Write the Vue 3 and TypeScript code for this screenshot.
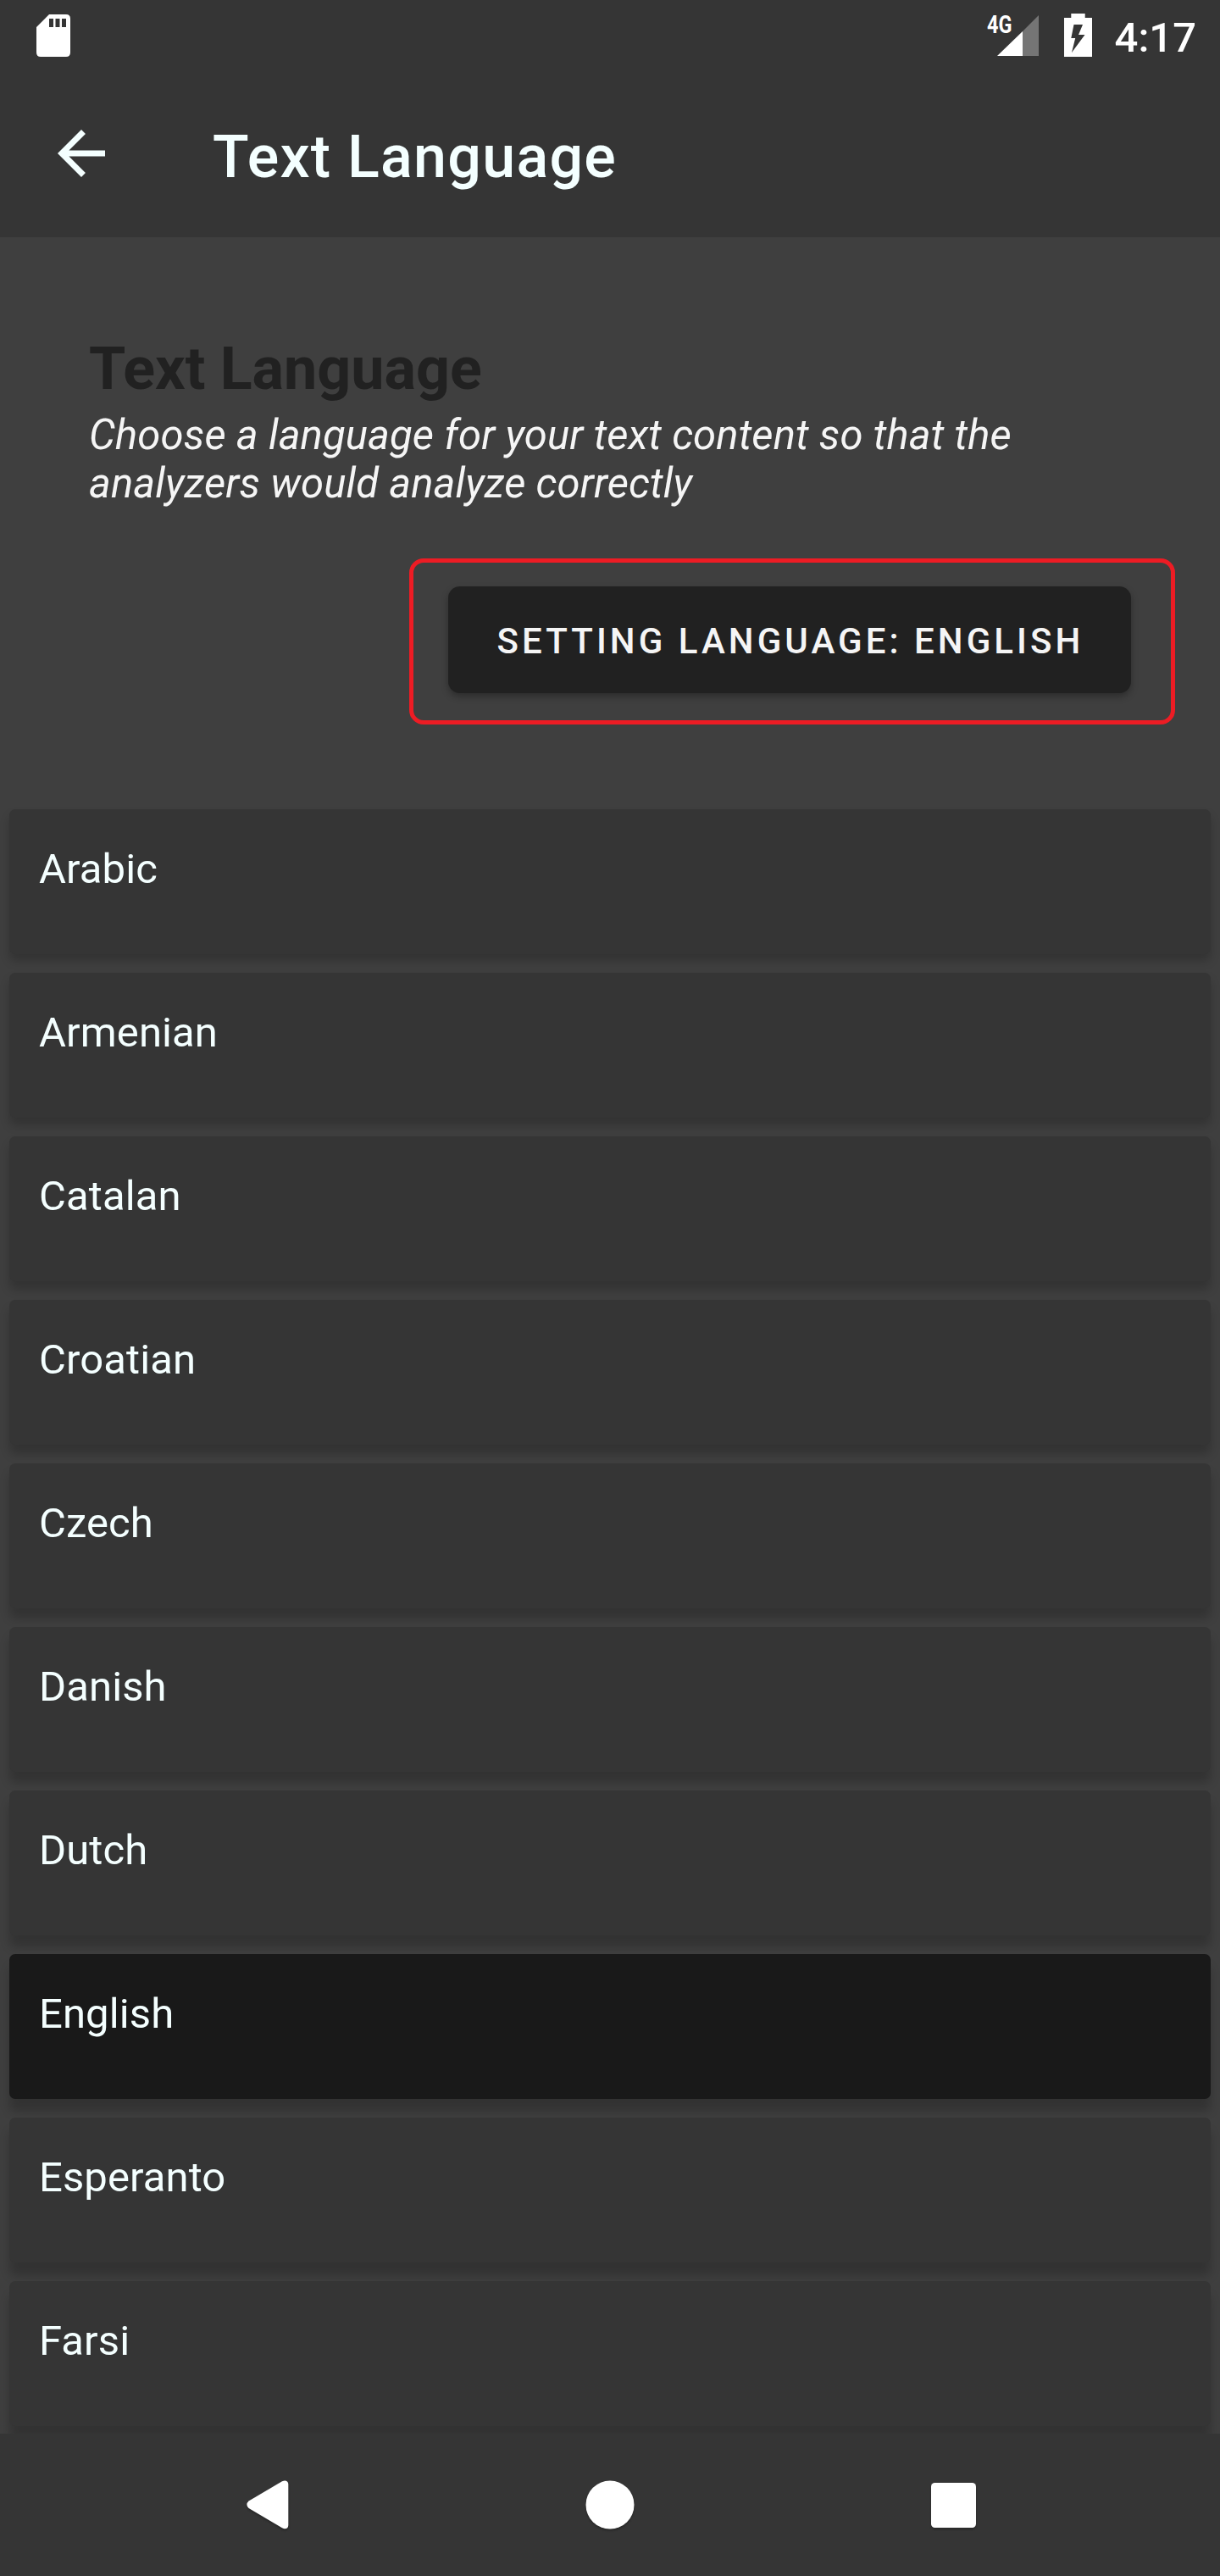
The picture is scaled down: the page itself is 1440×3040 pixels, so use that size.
<script setup lang="ts">
interface Language {
  name: string
  selected?: boolean
}

const languages: Language[] = [
  { name: 'Arabic' },
  { name: 'Armenian' },
  { name: 'Catalan' },
  { name: 'Croatian' },
  { name: 'Czech' },
  { name: 'Danish' },
  { name: 'Dutch' },
  { name: 'English', selected: true },
  { name: 'Esperanto' },
  { name: 'Farsi' },
]

const cardShadow = (index: number): string =>
  `0 ${(8 + index * 0.9).toFixed(1)}px 12px rgba(0, 0, 0, 0.2)`
</script>

<template>
  <div class="screen">
    <header class="top">
      <div class="status">
        <svg class="sd" width="40" height="50" viewBox="0 0 40 50">
          <path
            fill="#fff"
            fill-rule="evenodd"
            d="M15 0H35Q40 0 40 5V45Q40 50 35 50H5Q0 50 0 45V15ZM15 5V15H20V5ZM22.5 5V15H27.5V5ZM30 5V15H35V5Z"
          />
        </svg>
        <div class="status-right">
          <svg class="signal" width="66" height="62" viewBox="-4 -12 66 62">
            <path fill="#757575" d="M42 20L61 1V49H42Z" />
            <path fill="#fff" d="M12 49L42 20V49Z" />
            <text class="net" x="0" y="22" textLength="29.5" lengthAdjust="spacingAndGlyphs">4G</text>
          </svg>
          <svg class="battery" width="33" height="51" viewBox="0 0 33 51">
            <path
              fill="#fff"
              fill-rule="evenodd"
              d="M8.3 0H24.7V5H33V51H0V5H8.3ZM11.5 13L8.3 29H13.2L9 46L24.5 25H17L22 13Z"
            />
          </svg>
          <span class="time">4:17</span>
        </div>
      </div>
      <div class="bar">
        <svg class="back" width="84" height="84" viewBox="0 0 24 24">
          <path fill="#f4ffff" d="M20 11H7.83l5.59-5.59L12 4l-8 8 8 8 1.41-1.41L7.83 13H20v-2z" />
        </svg>
        <h1 class="title">Text Language</h1>
      </div>
    </header>

    <main class="body">
      <section class="intro">
        <h2 class="heading">Text Language</h2>
        <p class="desc">Choose a language for your text content so that the analyzers would analyze correctly</p>
      </section>
      <div class="action">
        <div class="highlight">
          <button class="setting" type="button">SETTING LANGUAGE: ENGLISH</button>
        </div>
      </div>
      <ul class="list">
        <li
          v-for="(lang, i) in languages"
          :key="lang.name"
          class="card"
          :class="{ selected: lang.selected }"
          :style="{ boxShadow: cardShadow(i) }"
        >
          {{ lang.name }}
        </li>
      </ul>
    </main>

    <nav class="nav">
      <svg width="50" height="58" viewBox="0 0 50 58">
        <path fill="#fff" d="M2.6 24.6L42 1.3Q44 .4 45 .4Q49.3 .4 49.3 5V53Q49.3 57.2 45 57.2Q44 57.2 42 56.2L2.6 33Q.4 31 .4 28.8Q.4 26.6 2.6 24.6Z" />
      </svg>
      <svg width="58" height="58" viewBox="0 0 58 58">
        <circle cx="29" cy="29" r="28.5" fill="#fff" />
      </svg>
      <svg width="53" height="53" viewBox="0 0 53 53">
        <rect width="53" height="53" rx="4.5" fill="#fff" />
      </svg>
    </nav>
  </div>
</template>

<style>
body {
  background: #3f3f3f;
}
</style>

<style scoped>
.screen {
  box-sizing: border-box;
  width: 1440px;
  height: 3040px;
  display: flex;
  flex-direction: column;
  overflow: hidden;
  background: #3f3f3f;
  font-family: Roboto, 'Liberation Sans', sans-serif;
}
.top {
  flex: none;
  height: 280px;
  background: #353535;
}
.status {
  display: flex;
  justify-content: space-between;
  height: 84px;
  padding: 0 28px 0 43px;
  box-sizing: border-box;
}
.sd {
  margin-top: 17px;
}
.status-right {
  display: flex;
  align-items: flex-start;
}
.signal {
  margin: 5px 29px 0 0;
}
.net {
  font-weight: 700;
  font-size: 29px;
  fill: #fff;
}
.battery {
  margin: 16px 27px 0 0;
}
.time {
  margin-top: 16px;
  font-size: 49px;
  font-weight: 500;
  line-height: 57px;
  color: #fff;
}
.bar {
  display: flex;
  align-items: center;
  height: 196px;
  padding-left: 54px;
}
.back {
  margin-right: 113px;
  margin-bottom: 3px;
}
.title {
  margin: 6px 0 0;
  font-size: 70px;
  font-weight: 500;
  line-height: 82px;
  letter-spacing: 1.25px;
  color: #f4ffff;
  white-space: nowrap;
}
.body {
  flex: 1;
  min-height: 0;
  overflow: hidden;
}
.intro {
  padding: 114px 105px 0;
}
.heading {
  margin: 0;
  font-size: 70px;
  font-weight: 700;
  line-height: 82px;
  color: #212121;
}
.desc {
  margin: 9px 0 0;
  width: 1130px;
  font-size: 49px;
  font-style: italic;
  line-height: 57px;
  letter-spacing: 0.11px;
  color: #f5f5f5;
}
.action {
  display: flex;
  justify-content: flex-end;
  padding: 60px 53px 0 0;
}
.highlight {
  box-sizing: border-box;
  width: 904px;
  height: 196px;
  padding: 28px 0 0 41px;
  border: 5px solid #ed1c24;
  border-radius: 17px;
}
.setting {
  display: block;
  box-sizing: border-box;
  width: 806px;
  height: 126px;
  padding: 3px 0 0 2px;
  border: 0;
  border-radius: 14px;
  background: #212121;
  color: #f5f5f5;
  font: 500 42px/123px Roboto, 'Liberation Sans', sans-serif;
  letter-spacing: 4.05px;
  white-space: nowrap;
  box-shadow: 0 4px 9px rgba(0, 0, 0, 0.3);
}
.list {
  display: flex;
  flex-direction: column;
  gap: 22px;
  margin: 0;
  padding: 100px 11px 0;
  list-style: none;
}
.card {
  box-sizing: border-box;
  height: 171px;
  padding: 42px 35px 0;
  border-radius: 7px;
  background: #353535;
  color: #f4ffff;
  font-size: 49px;
  line-height: 57px;
  letter-spacing: 0.1px;
}
.card.selected {
  background: #191919;
}
.nav {
  flex: none;
  display: flex;
  align-items: center;
  justify-content: space-between;
  height: 168px;
  padding: 0 288px 0 291px;
  box-sizing: border-box;
  background: #353535;
}
.nav svg {
  filter: drop-shadow(0 2px 1px rgba(0, 0, 0, 0.25));
}
</style>
